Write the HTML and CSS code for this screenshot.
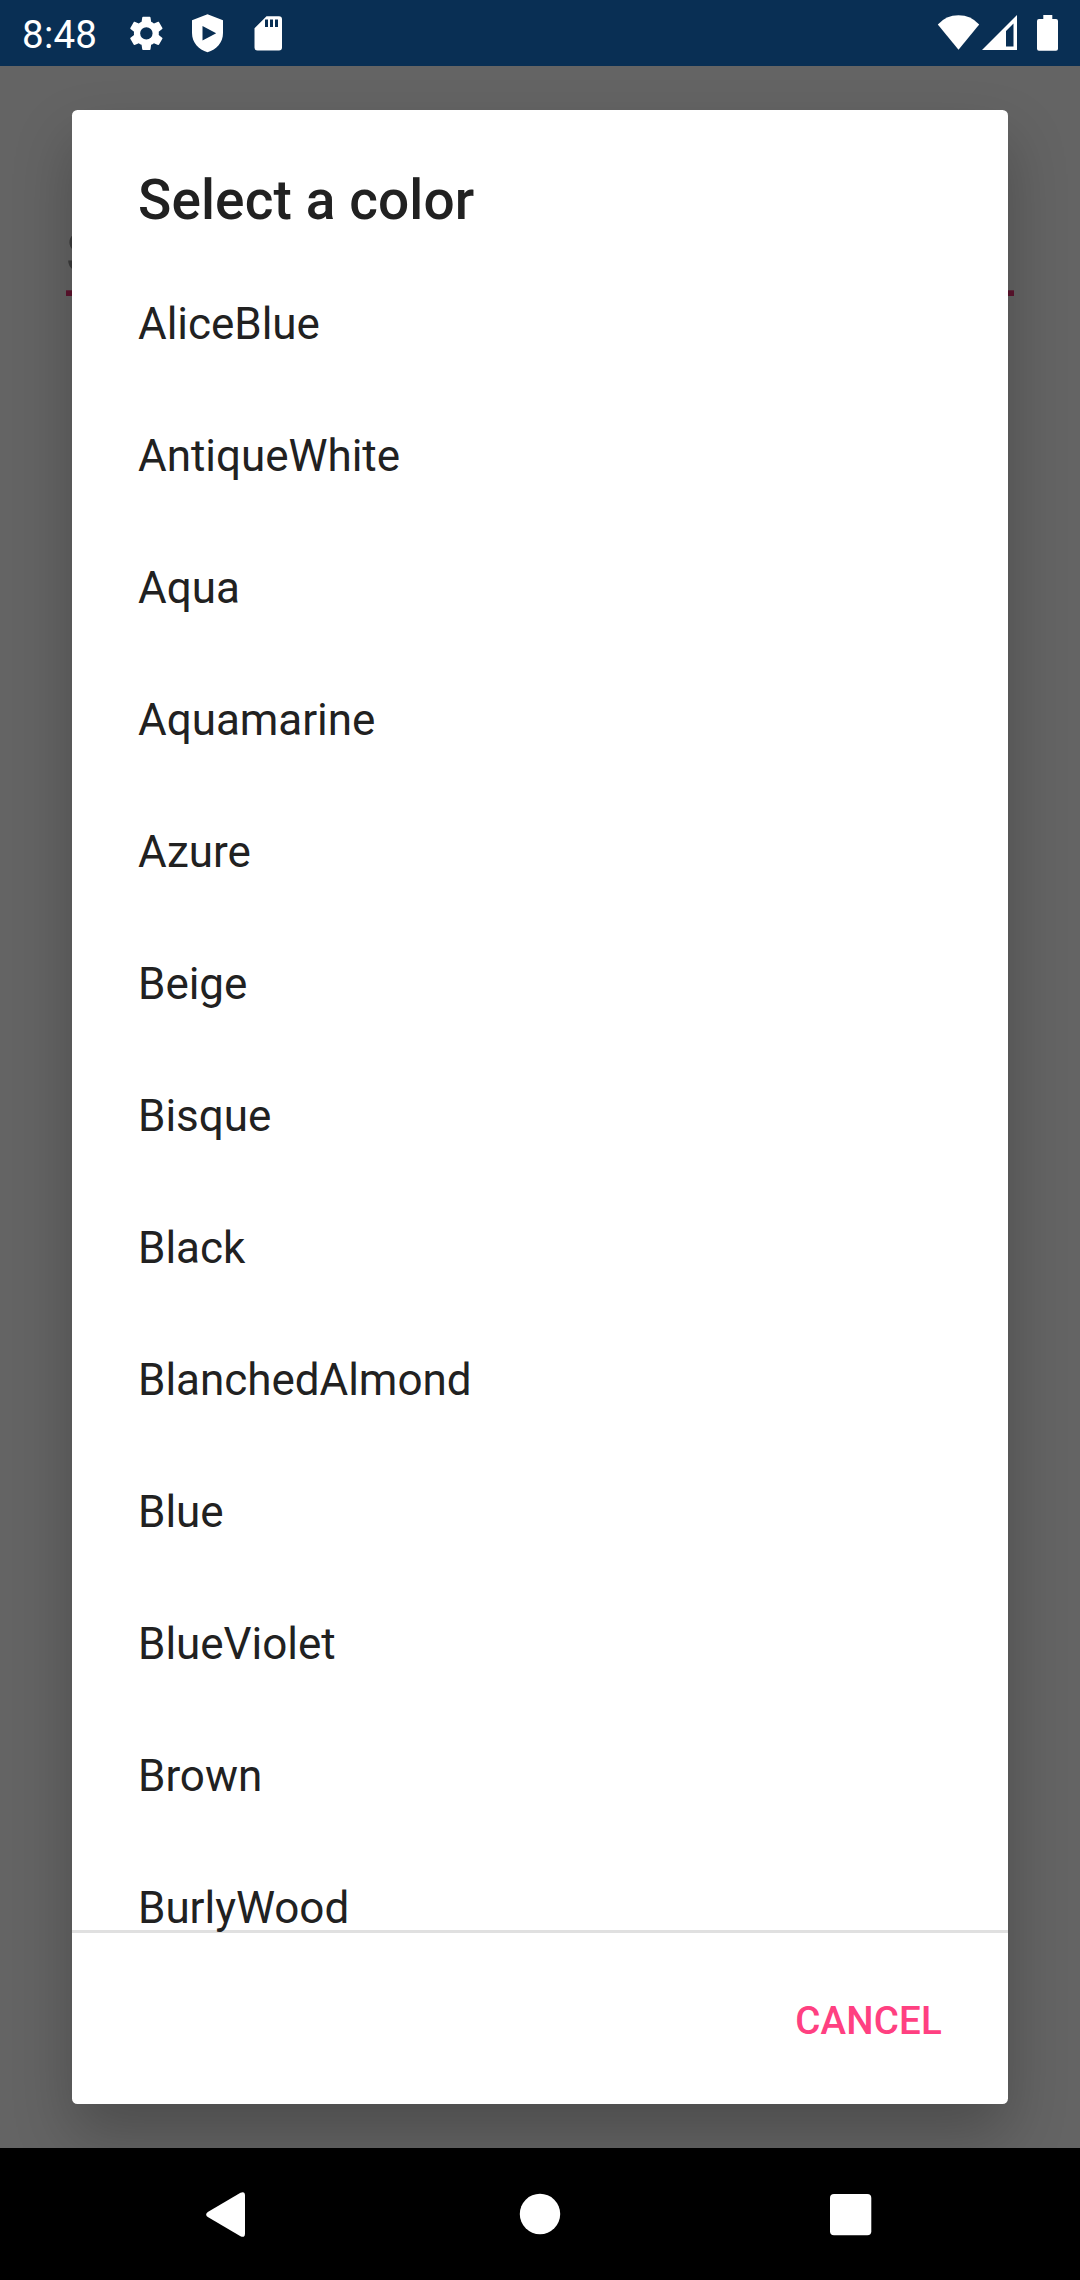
FILE: index.html
```html
<!DOCTYPE html>
<html lang="en">
<head>
<meta charset="utf-8">
<title>Select a color</title>
<link rel="stylesheet" href="styles.css">
</head>
<body>
<div class="screen">
  <header class="status-bar">
    <span class="clock">8:48</span>
    <svg class="notifications" width="180" height="66" viewBox="0 0 180 66" fill="#fff">
      <path transform="translate(5.6 12.6) scale(1.73)" fill-rule="evenodd" d="M19.14 12.94c.04-.3.06-.61.06-.94 0-.32-.02-.64-.07-.94l2.03-1.58c.18-.14.23-.41.12-.61l-1.92-3.32c-.12-.22-.37-.29-.59-.22l-2.39.96c-.5-.38-1.03-.7-1.62-.94L14.4 2.81c-.04-.24-.24-.41-.48-.41h-3.84c-.24 0-.43.17-.47.41l-.36 2.54c-.59.24-1.13.57-1.62.94l-2.39-.96c-.22-.08-.47 0-.59.22L2.74 8.87c-.12.21-.08.47.12.61l2.03 1.58c-.05.3-.09.63-.09.94s.02.64.07.94l-2.03 1.58c-.18.14-.23.41-.12.61l1.92 3.32c.12.22.37.29.59.22l2.39-.96c.5.38 1.03.7 1.62.94l.36 2.54c.05.24.24.41.48.41h3.84c.24 0 .44-.17.47-.41l.36-2.54c.59-.24 1.13-.56 1.62-.94l2.39.96c.22.08.47 0 .59-.22l1.92-3.32c.12-.22.07-.47-.12-.61zM12 15.6A3.6 3.6 0 1 1 12 8.4a3.6 3.6 0 0 1 0 7.2z"/>
      <path fill-rule="evenodd" d="M87.500 14.300 103 20.200V33c0 9.500-6.500 16.500-15.500 19.200C78.500 49.500 72 42.500 72 33V20.200ZM82.500 26v14.500L96.200 33.200Z"/>
      <path fill-rule="evenodd" d="M146.500 16.300H159q3 0 3 3V47.600q0 3-3 3H137.500q-3 0-3-3V28.300ZM145 19.500V27h3v-7.500ZM150 19.500V27h3v-7.500ZM155 19.500V27h3v-7.500Z"/>
    </svg>
    <svg class="system" width="124" height="66" viewBox="0 0 124 66" fill="#fff">
      <path d="M1.800 24.500Q10 15.200 22.500 15.200T43.200 24.500L22.500 49.700Z"/>
      <path fill-rule="evenodd" d="M81 15V50H46ZM77.500 23.500 70 31V46.500H77.500Z"/>
      <path d="M107.300 15h9v4H120q2 0 2 2V48.800q0 2-2 2H103q-2 0-2-2V21q0-2 2-2h4.300Z"/>
    </svg>
  </header>
  <main class="page">
    <div class="field">S</div>
    <section class="dialog" role="dialog">
      <h1 class="title">Select a color</h1>
      <ul class="list">
        <li>AliceBlue</li>
        <li>AntiqueWhite</li>
        <li>Aqua</li>
        <li>Aquamarine</li>
        <li>Azure</li>
        <li>Beige</li>
        <li>Bisque</li>
        <li>Black</li>
        <li>BlanchedAlmond</li>
        <li>Blue</li>
        <li>BlueViolet</li>
        <li>Brown</li>
        <li>BurlyWood</li>
      </ul>
      <footer class="actions"><button class="cancel">CANCEL</button></footer>
    </section>
  </main>
  <nav class="nav-bar">
    <svg width="1080" height="132" viewBox="0 0 1080 132" fill="#fff">
      <path d="M207.800 63.900 240.500 44.700Q245 42.800 245 47.500V85.500Q245 90.200 240.500 88.300L207.800 69.100Q204.500 66.500 207.800 63.900Z"/>
      <circle cx="540" cy="66" r="20.200"/>
      <rect x="830" y="46" width="41.300" height="41.300" rx="4"/>
    </svg>
  </nav>
</div>
</body>
</html>
```
FILE: styles.css
```css
* { box-sizing: border-box; }

body {
  margin: 0;
  font-family: Roboto, "Liberation Sans", sans-serif;
}

.screen {
  width: 1080px;
  height: 2280px;
  display: flex;
  flex-direction: column;
  overflow: hidden;
}

.status-bar {
  height: 66px;
  flex: none;
  display: flex;
  align-items: center;
  padding: 0 20px 0 22px;
  background: #092f54;
  color: #fff;
}

.clock {
  width: 98px;
  font-size: 38.5px;
  line-height: 66px;
  letter-spacing: .25px;
  padding-top: 3px;
}

.system { margin-left: auto; }

.page {
  position: relative;
  flex: 1;
  padding: 44px 72px 43px;
  background: #646464;
  overflow: hidden;
}

/* Text field left behind the open dialog */
.field {
  position: absolute;
  top: 144px;
  left: 66px;
  right: 66px;
  height: 86px;
  background: linear-gradient(#602c3e 1px, #5e142e 1px) bottom / 100% 6px no-repeat;
  color: #3c3c3c;
  font-size: 55px;
  line-height: 86px;
}

.dialog {
  position: relative;
  height: 1994px;
  display: flex;
  flex-direction: column;
  border-radius: 5.5px;
  background: #fff;
  color: #212121;
  box-shadow: 0 30px 60px rgba(0, 0, 0, .24);
}

.title {
  height: 147px;
  flex: none;
  margin: 0;
  padding: 50px 66px 0;
  font-size: 55px;
  font-weight: 500;
  line-height: 80px;
  letter-spacing: .1px;
}

.list {
  height: 1676px;
  flex: none;
  margin: 0;
  padding: 1px 66px 0;
  list-style: none;
  overflow: hidden;
  background: linear-gradient(#e0e0e0, #e0e0e0) bottom / 100% 3px no-repeat;
}

.list li {
  height: 132px;
  font-size: 44px;
  line-height: 132px;
  letter-spacing: -.03px;
}

.actions {
  flex: 1;
  display: flex;
  justify-content: flex-end;
  align-items: center;
  padding: 4px 66px 0;
}

.cancel {
  padding: 0;
  border: 0;
  background: none;
  color: #ff4081;
  font: 500 38.5px/60px Roboto, "Liberation Sans", sans-serif;
  letter-spacing: .2px;
}

.nav-bar {
  height: 132px;
  flex: none;
  background: #000;
}

.nav-bar svg { display: block; }
```
